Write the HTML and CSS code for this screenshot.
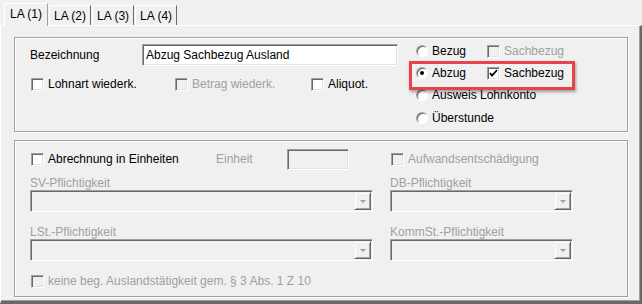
FILE: index.html
```html
<!DOCTYPE html>
<html lang="de">
<head>
    <meta charset="UTF-8">
    <title>Lohnart LA</title>
    <link rel="stylesheet" href="styles.css">
</head>
<body>

<div class="tabs">
    <div class="tab active">LA (1)</div>
    <div class="tab">LA (2)</div>
    <div class="tab">LA (3)</div>
    <div class="tab">LA (4)</div>
</div>

<div class="panel">
    <div class="group group-top">
        <div class="left-col">
            <div class="row-name">
                <span class="name-label">Bezeichnung</span>
                <div class="textbox">Abzug Sachbezug Ausland</div>
            </div>
            <div class="row-checks">
                <label class="check w144"><span class="box"></span>Lohnart wiederk.</label>
                <label class="check w136 disabled"><span class="box"></span>Betrag wiederk.</label>
                <label class="check"><span class="box"></span>Aliquot.</label>
            </div>
        </div>
        <div class="right-col">
            <div class="opt-row">
                <label class="radio-item"><span class="radio"></span>Bezug</label>
                <label class="check disabled"><span class="box"></span>Sachbezug</label>
            </div>
            <div class="opt-row">
                <label class="radio-item"><span class="radio on"></span>Abzug</label>
                <label class="check"><span class="box"><svg width="11" height="11" viewBox="0 0 11 11"><path d="M2 5 L4 7.5 L9 2" fill="none" stroke="#000" stroke-width="1.8"/></svg></span>Sachbezug</label>
            </div>
            <div class="opt-row">
                <label class="radio-item wide"><span class="radio"></span>Ausweis Lohnkonto</label>
            </div>
            <div class="opt-row">
                <label class="radio-item wide"><span class="radio"></span>Überstunde</label>
            </div>
            <div class="highlight"></div>
        </div>
    </div>

    <div class="group group-bottom">
        <div class="row-units">
            <label class="check w185"><span class="box"></span>Abrechnung in Einheiten</label>
            <span class="unit-label">Einheit</span>
            <div class="textbox small off"></div>
            <label class="check disabled gap-left"><span class="box"></span>Aufwandsentschädigung</label>
        </div>
        <div class="combo-grid">
            <div class="field">
                <div class="field-label">SV-Pflichtigkeit</div>
                <div class="combo"><span class="combo-btn"><span class="arrow"></span></span></div>
            </div>
            <div class="field">
                <div class="field-label">DB-Pflichtigkeit</div>
                <div class="combo"><span class="combo-btn"><span class="arrow"></span></span></div>
            </div>
            <div class="field second">
                <div class="field-label">LSt.-Pflichtigkeit</div>
                <div class="combo"><span class="combo-btn"><span class="arrow"></span></span></div>
            </div>
            <div class="field second">
                <div class="field-label">KommSt.-Pflichtigkeit</div>
                <div class="combo"><span class="combo-btn"><span class="arrow"></span></span></div>
            </div>
        </div>
        <div class="row-last">
            <label class="check disabled"><span class="box"></span>keine beg. Auslandstätigkeit gem. § 3 Abs. 1 Z 10</label>
        </div>
    </div>
</div>

</body>
</html>
```

FILE: styles.css
```css
body {
    margin: 0;
    width: 642px;
    height: 304px;
    overflow: hidden;
    background-color: #f0f0f0;
    font-family: "Liberation Sans", Arial, sans-serif;
    font-size: 12px;
    color: #000;
}

/* tabs */
.tabs {
    display: flex;
    align-items: flex-end;
    height: 25px;
    padding-left: 4px;
    box-sizing: border-box;
}

.tab {
    height: 20px;
    padding: 0 4px;
    box-sizing: border-box;
    border: 1px solid;
    border-color: #fff #696969 transparent #fff;
    border-bottom: none;
    display: flex;
    align-items: center;
    margin-left: 1px;
}

.tab.active {
    height: 23px;
    margin-bottom: -1px;
    margin-left: 0;
    padding: 0 5px 2px 5px;
    position: relative;
    z-index: 1;
    background-color: #f0f0f0;
    border-right-color: #a0a0a0;
}

/* panel */
.panel {
    height: 279px;
    box-sizing: border-box;
    border-top: 1px solid #fff;
    border-left: 1px solid #fff;
    border-right: 2px solid #696969;
    border-bottom: 3px solid #696969;
    box-shadow: inset -1px -1px #a0a0a0;
    padding: 11px 0 0 13px;
}

.group {
    width: 614px;
    box-sizing: border-box;
    border: 1px solid #a0a0a0;
    box-shadow: inset 1px 1px #fff, 1px 1px #fff;
}

.group-top {
    height: 95px;
    display: flex;
    padding: 6px 0 0 15px;
}

.group-bottom {
    height: 157px;
    margin-top: 8px;
    padding: 10px 0 0 15px;
}

/* top group */
.left-col {
    width: 386px;
}

.row-name {
    display: flex;
    align-items: center;
    height: 22px;
}

.name-label {
    width: 112px;
}

.textbox {
    width: 256px;
    height: 22px;
    box-sizing: border-box;
    background-color: #fff;
    border: 1px solid;
    border-color: #a0a0a0 #fff #fff #a0a0a0;
    box-shadow: inset 1px 1px #696969, inset -1px -1px #e3e3e3;
    padding: 3px 0 0 3px;
    white-space: nowrap;
}

.textbox.small {
    width: 62px;
    height: 21px;
}

.textbox.off {
    background-color: #f0f0f0;
}

.row-checks {
    display: flex;
    align-items: center;
    height: 16px;
    margin-top: 10px;
    padding-left: 1px;
}

.check {
    display: flex;
    align-items: center;
    gap: 4px;
    height: 16px;
    white-space: nowrap;
}

.w144 { width: 144px; }
.w136 { width: 136px; }
.w185 { width: 185px; }

.box {
    width: 13px;
    height: 13px;
    box-sizing: border-box;
    background-color: #fff;
    border: 1px solid;
    border-color: #a0a0a0 #fff #fff #a0a0a0;
    box-shadow: inset 1px 1px #696969, inset -1px -1px #e3e3e3;
    display: flex;
    align-items: center;
    justify-content: center;
}

.check.disabled {
    color: #a0a0a0;
}

.check.disabled .box {
    background-color: #f0f0f0;
}

.right-col {
    position: relative;
    margin-top: -4px;
}

.opt-row {
    display: flex;
    align-items: center;
    height: 22px;
}

.opt-row:nth-child(n+3) {
    height: 22.5px;
}

.radio-item {
    display: flex;
    align-items: center;
    gap: 4px;
    width: 71px;
    white-space: nowrap;
}

.radio-item.wide {
    width: auto;
}

.radio {
    width: 12px;
    height: 12px;
    box-sizing: border-box;
    border-radius: 50%;
    background-color: #fff;
    border: 1px solid;
    border-color: #a0a0a0 #fff #fff #a0a0a0;
    box-shadow: inset 1px 1px #696969;
    display: flex;
    align-items: center;
    justify-content: center;
}

.radio.on::after {
    content: "";
    width: 4px;
    height: 4px;
    border-radius: 50%;
    background-color: #000;
}

/* red annotation frame */
.highlight {
    position: absolute;
    left: -7px;
    top: 21px;
    width: 166px;
    height: 29px;
    box-sizing: border-box;
    border: 3px solid #e8434b;
    box-shadow: 1px 2px 3px rgba(0, 0, 0, 0.35);
}

/* bottom group */
.row-units {
    display: flex;
    align-items: center;
    height: 16px;
    padding-left: 1px;
}

.unit-label {
    width: 71px;
    color: #a0a0a0;
}

.gap-left {
    margin-left: 42px;
}

.combo-grid {
    display: grid;
    grid-template-columns: 343px 183px;
    column-gap: 17px;
    margin-top: 9px;
}

.field.second {
    margin-top: 13px;
}

.field-label {
    height: 14px;
    line-height: 14px;
    color: #a0a0a0;
}

.combo {
    height: 22px;
    box-sizing: border-box;
    border: 1px solid;
    border-color: #a0a0a0 #fff #fff #a0a0a0;
    box-shadow: inset 1px 1px #696969;
    display: flex;
    justify-content: flex-end;
    padding: 1px 1px 1px 2px;
}

.combo-btn {
    width: 17px;
    box-sizing: border-box;
    background-color: #f0f0f0;
    border: 1px solid;
    border-color: #f0f0f0 #696969 #696969 #f0f0f0;
    box-shadow: inset 1px 1px #fff, inset -1px -1px #a0a0a0;
    display: flex;
    align-items: center;
    justify-content: center;
}

.arrow {
    width: 0;
    height: 0;
    border-left: 3px solid transparent;
    border-right: 3px solid transparent;
    border-top: 3px solid #a0a0a0;
}

.row-last {
    margin-top: 12px;
    padding-left: 1px;
}
```
